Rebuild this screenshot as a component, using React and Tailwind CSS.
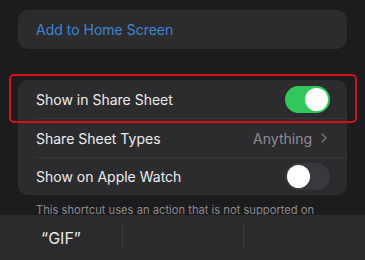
import React from 'react';

function Toggle({ on }) {
    return (
        <div className={`w-[45px] h-[27px] rounded-full p-[2px] flex items-center ${on ? 'bg-[#30c85a] justify-end' : 'bg-[#39393d] justify-start'}`}>
            <div className="w-[23px] h-[23px] rounded-full bg-white" />
        </div>
    );
}

export default function App() {
    return (
        <div className="w-[365px] h-[260px] bg-[#1c1c1e] overflow-hidden flex flex-col" style={{ fontFamily: 'Inter, "Liberation Sans", sans-serif' }}>
            <div className="px-[18px] pt-[10px]">
                {/* Add to home screen */}
                <div className="h-[39px] rounded-[10px] bg-[#2c2c2e] flex items-center pl-[18px] text-[14px] text-[#3c86d8]">
                    Add to Home Screen
                </div>

                {/* Share sheet options */}
                <div className="relative mt-[31px] rounded-[10px] bg-[#2c2c2e] text-[14px] text-[#ececee]">
                    <div className="h-[38px] flex items-center justify-between pl-[18px] pr-[17px]">
                        <span>Show in Share Sheet</span>
                        <Toggle on />
                    </div>
                    <div className="ml-[18px] h-px bg-[#38383a]" />
                    <div className="h-[38px] flex items-center justify-between pl-[18px] pr-[20px]">
                        <span>Share Sheet Types</span>
                        <span className="flex items-center gap-[9px] text-[#8d8d92]">
                            Anything
                            <svg width="6" height="10" viewBox="0 0 6 10" fill="none">
                                <path d="M1 1l4 4-4 4" stroke="#6f6f74" strokeWidth="1.6" strokeLinecap="round" strokeLinejoin="round" />
                            </svg>
                        </span>
                    </div>
                    <div className="ml-[18px] h-px bg-[#38383a]" />
                    <div className="h-[37px] flex items-center justify-between pl-[18px] pr-[17px]">
                        <span>Show on Apple Watch</span>
                        <Toggle on={false} />
                    </div>

                    {/* highlight box */}
                    <div className="absolute -left-[9px] -top-[6px] w-[348px] h-[49px] rounded-[5px] border-2 border-[#d2111b]" />
                </div>

                <div className="h-[20px] overflow-hidden pt-[9px] pl-[18px] text-[11.2px] leading-[13px] text-[#8a8a8f] whitespace-nowrap">
                    This shortcut uses an action that is not supported on
                </div>
            </div>

            {/* suggestion bar */}
            <div className="flex-1 bg-[#2b2b2d] flex items-center">
                <div className="w-[122px] flex justify-center text-[16px] text-[#e8e8ea]">“GIF”</div>
                <div className="w-px h-[25px] bg-[#3a3a3c]" />
                <div className="w-[120px]" />
                <div className="w-px h-[25px] bg-[#3a3a3c]" />
                <div className="flex-1" />
            </div>
        </div>
    );
}
